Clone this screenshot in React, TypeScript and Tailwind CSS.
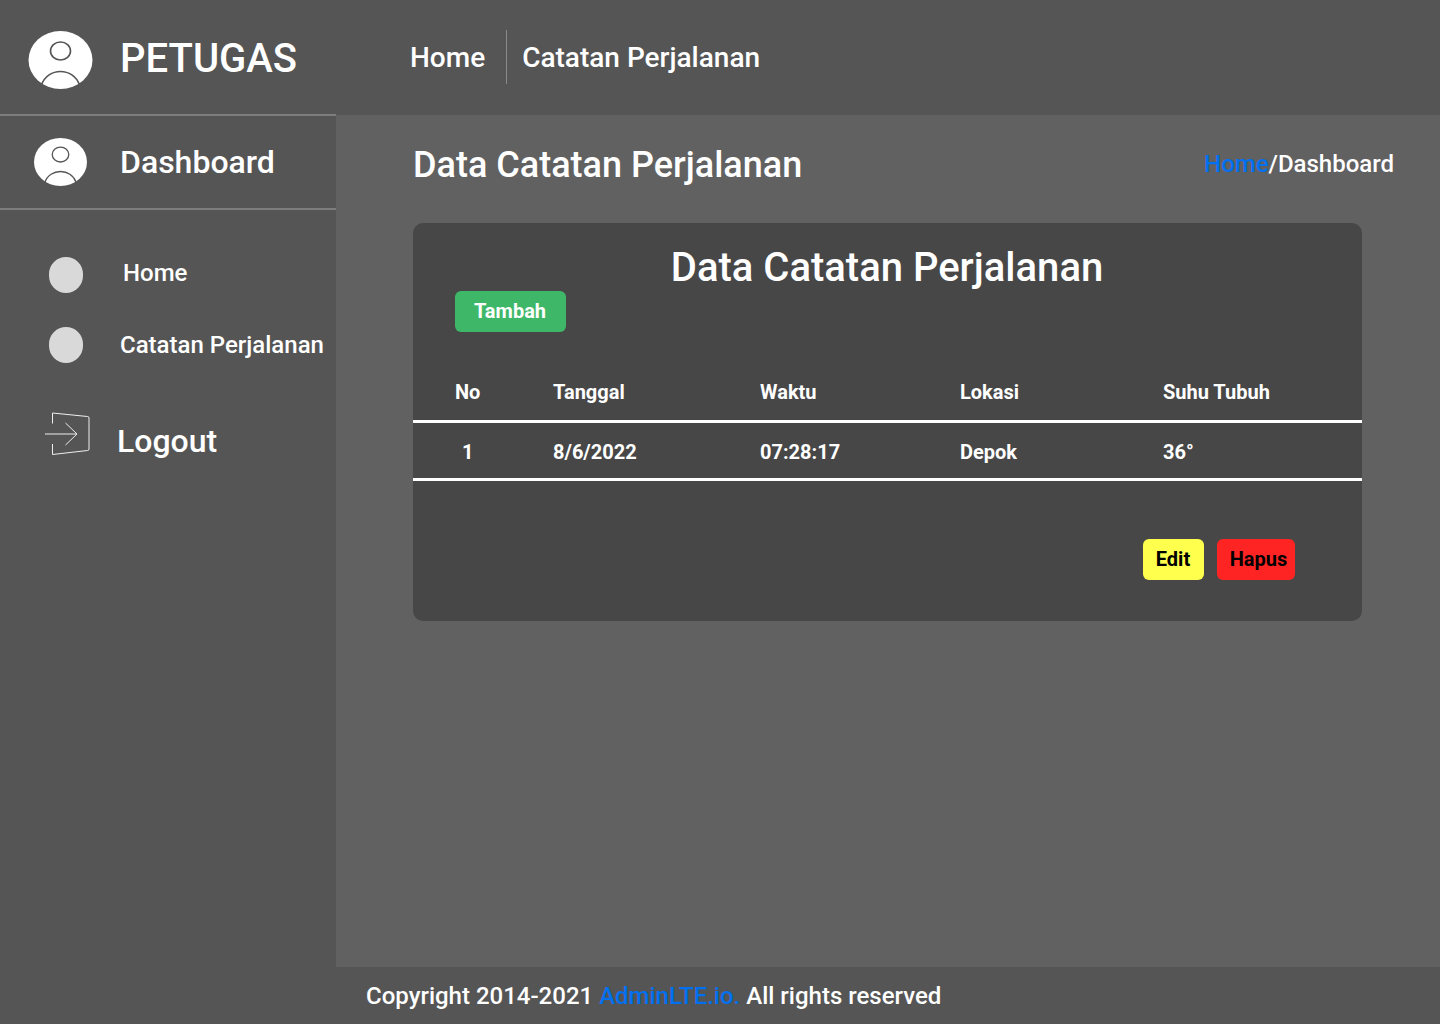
const Avatar = ({ w, h }: { w: number; h: number }) => (
  <svg width={w} height={h} viewBox="0 0 64 58" className="block">
    <ellipse cx="32" cy="29" rx="32" ry="29" fill="#fff" />
    <ellipse cx="32" cy="20" rx="10" ry="9" fill="none" stroke="#555" strokeWidth="1.6" />
    <path d="M13 54 C19 36 45 36 51 54" fill="none" stroke="#555" strokeWidth="1.6" />
  </svg>
);

const Dot = () => <div className="w-[34px] h-[36px] rounded-full bg-[#d9d9d9]" />;

const cols = "grid grid-cols-[98px_207px_200px_203px_1fr] pl-[42px]";

export default function App() {
  return (
    <div className="w-[1440px] h-[1024px] overflow-hidden flex flex-col bg-[#616161] text-white font-['Roboto',sans-serif]">
      <header className="h-[115px] shrink-0 bg-[#555555] flex items-start pt-[29px]">
        <div className="w-[336px] flex items-center pl-[28px]">
          <div className="pt-[2px]"><Avatar w={65} h={58} /></div>
          <span className="ml-[27px] text-[40px] leading-[54px] font-medium">PETUGAS</span>
        </div>
        <nav className="flex items-center pl-[74px] text-[28px]">
          <span className="pr-[21px] leading-[54px] font-medium pt-[2px]">Home</span>
          <span className="pl-[15px] border-l border-[#8a8a8a] h-[54px] leading-[56px] font-medium">Catatan Perjalanan</span>
        </nav>
      </header>
      <div className="flex-1 flex min-h-0">
        <aside className="w-[336px] shrink-0 bg-[#555555] -mt-px">
          <div className="h-[96px] border-y-2 border-[#7d7d7d] flex items-center pl-[34px]">
            <Avatar w={53} h={50} />
            <span className="ml-[33px] text-[32px] leading-[40px] font-medium">Dashboard</span>
          </div>
          <div className="pt-[47px] pl-[49px] flex flex-col">
            <div className="flex items-center h-[36px]">
              <Dot />
              <span className="ml-[40px] text-[24px] leading-[30px] -mt-[4px] font-medium">Home</span>
            </div>
            <div className="flex items-center h-[36px] mt-[34px]">
              <Dot />
              <span className="ml-[37px] text-[24px] leading-[30px] font-medium">Catatan Perjalanan</span>
            </div>
            <div className="flex items-start mt-[48px] -ml-[5px]">
              <svg width="47" height="45" viewBox="0 0 47 45" fill="none" stroke="#eeeeee" strokeWidth="1" className="block mt-[1px]">
                <path d="M8.5 11.5 V1 L43.5 4.5 Q45 4.5 45 6 V37 Q45 38.5 43.5 38.5 L8.5 42.5 V32" />
                <path d="M1 22 H33 M21.5 11 L33 22 L21.5 33" />
              </svg>
              <span className="ml-[26px] mt-[10px] text-[32px] leading-[40px] font-medium">Logout</span>
            </div>
          </div>
        </aside>
        <div className="flex-1 flex flex-col min-w-0">
          <main className="flex-1 pl-[77px] pr-[46px]">
            <div className="flex justify-between items-start h-[108px] pt-[28px]">
              <h1 className="text-[36px] leading-[44px] font-medium">Data Catatan Perjalanan</h1>
              <div className="text-[24px] leading-[30px] pt-[6px] font-medium">
                <span className="text-[#0070f0]">Home</span>/Dashboard
              </div>
            </div>
            <section className="w-[949px] h-[398px] bg-[#474747] rounded-[10px] flex flex-col">
              <h2 className="text-center text-[40px] leading-[48px] font-medium mt-[21px] -mb-[1px] pr-[1px]">Data Catatan Perjalanan</h2>
              <button className="ml-[42px] w-[111px] h-[41px] rounded-[6px] bg-[#3eb868] text-[20px] font-bold pb-[2px] pr-[1px]">Tambah</button>
              <div className={`${cols} mt-[48px] text-[20px] leading-[24px] font-bold pb-[16px] border-b-[3px] border-white`}>
                <span>No</span><span>Tanggal</span><span>Waktu</span><span>Lokasi</span><span>Suhu Tubuh</span>
              </div>
              <div className={`${cols} text-[20px] leading-[24px] font-bold pt-[17px] pb-[14px] border-b-[3px] border-white`}>
                <span className="pl-[7px]">1</span><span>8/6/2022</span><span>07:28:17</span><span>Depok</span><span>36°</span>
              </div>
              <div className="flex justify-end gap-[13px] pr-[67px] mt-[58px] text-black text-[20px] font-bold">
                <button className="w-[61px] h-[41px] rounded-[6px] bg-[#ffff4d] pb-[2px] pr-[1px]">Edit</button>
                <button className="w-[78px] h-[41px] rounded-[6px] bg-[#ff2424] pl-[5px] pb-[2px]">Hapus</button>
              </div>
            </section>
          </main>
          <footer className="h-[57px] shrink-0 bg-[#555555] flex items-center pl-[30px] text-[24px] font-medium">
            <span>Copyright 2014-2021 <span className="text-[#0070f0]">AdminLTE.io.</span> All rights reserved</span>
          </footer>
        </div>
      </div>
    </div>
  );
}
